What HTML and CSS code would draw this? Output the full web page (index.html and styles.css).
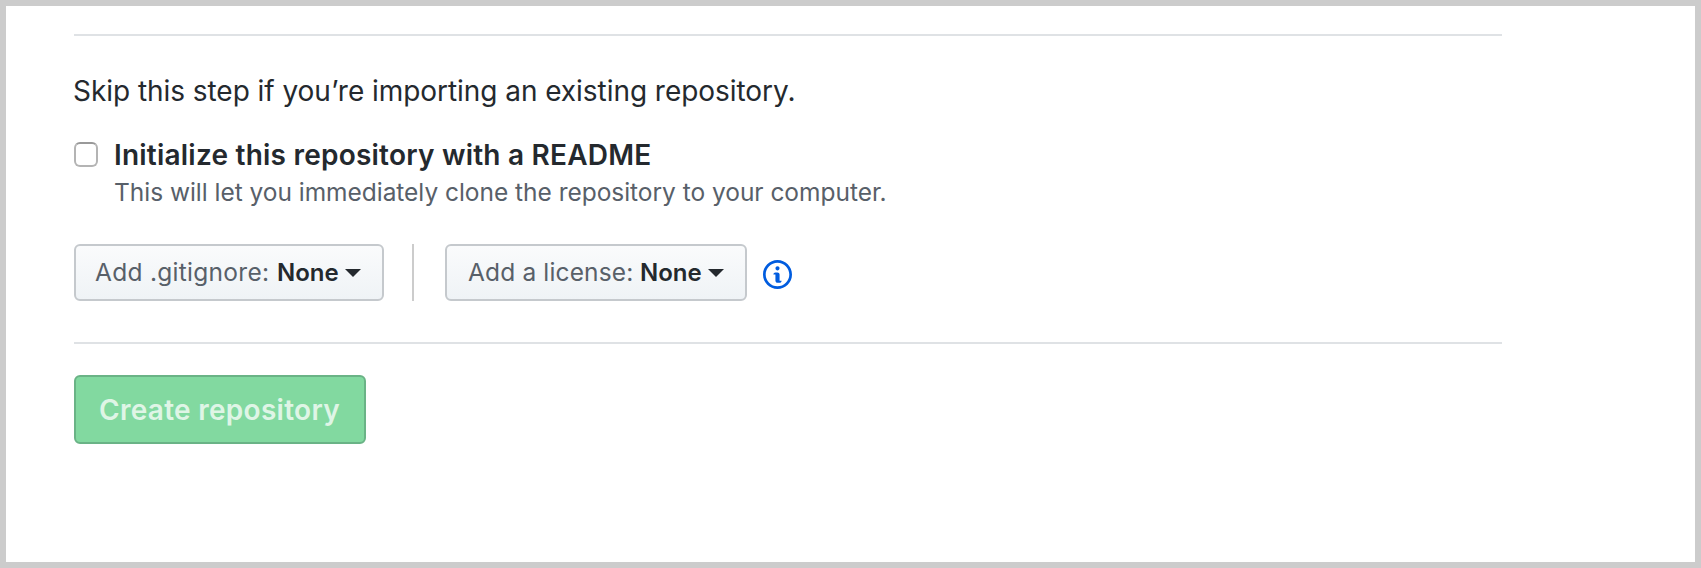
FILE: index.html
```html
<!DOCTYPE html>
<html lang="en">
<head>
<meta charset="utf-8">
<title>Create a new repository</title>
<link rel="stylesheet" href="styles.css">
</head>
<body>
<main class="page">
  <form class="form">
    <section class="options">
      <p class="skip">Skip this step if you’re importing an existing repository.</p>
      <div class="check-row">
        <input class="checkbox" type="checkbox" id="readme">
        <div>
          <label class="check-label" for="readme">Initialize this repository with a README</label>
          <p class="note">This will let you immediately clone the repository to your computer.</p>
        </div>
      </div>
      <div class="selects">
        <button class="select select-ignore" type="button"><span class="ignore-text">Add .gitignore:</span><b class="value">None</b><span class="caret"></span></button>
        <span class="divider"></span>
        <button class="select select-license" type="button"><span class="license-text">Add a license:</span><b class="value">None</b><span class="caret"></span></button>
        <svg class="info" viewBox="0 0 14 14" fill="#005cdf"><path fill-rule="evenodd" d="M6.3 5.69a.942.942 0 0 1-.28-.7c0-.28.09-.52.28-.7.19-.18.42-.28.7-.28.28 0 .52.09.7.28.18.19.28.42.28.7 0 .28-.09.52-.28.7a1 1 0 0 1-.7.3c-.28 0-.52-.11-.7-.3zM8 7.99c-.02-.25-.11-.48-.31-.69-.2-.19-.42-.3-.69-.31H6c-.27.02-.48.13-.69.31-.2.2-.3.44-.31.69h1v3c.02.27.11.5.31.69.2.2.42.31.69.31h1c.27 0 .48-.11.69-.31.2-.19.3-.42.31-.69H8V7.98v.01zM7 2.3c-3.14 0-5.7 2.54-5.7 5.68 0 3.14 2.56 5.7 5.7 5.7s5.7-2.55 5.7-5.7c0-3.15-2.56-5.69-5.7-5.69v.01zM7 .98c3.86 0 7 3.14 7 7s-3.14 7-7 7-7-3.12-7-7 3.14-7 7-7z" transform="translate(0 -.98)"/></svg>
      </div>
    </section>
    <button class="create" type="button" disabled>Create repository</button>
  </form>
</main>
</body>
</html>
```
FILE: styles.css
```css
* { box-sizing: border-box; }
body { margin: 0; font-family: Inter, "Liberation Sans", sans-serif; color: #24292e; background: #fff; }
p { margin: 0; }
.page { height: 568px; border: 6px solid #ccc; padding: 28px 193px 0 68px; }
.options { border-top: 2px solid #dfe2e5; border-bottom: 2px solid #dfe2e5; height: 310px; padding-top: 34px; }
.skip { margin-left: -1px; font-size: 28px; line-height: 42px; letter-spacing: -0.05px; white-space: nowrap; }
.check-row { display: flex; gap: 16px; margin-top: 24px; white-space: nowrap; }
.checkbox { appearance: none; width: 24px; height: 25px; margin: 6px 0 0; border: 2px solid #b4b4b4; border-top-color: #999; border-radius: 6px; background: #fff; }
.check-label { display: block; width: max-content; font-size: 28px; line-height: 38px; letter-spacing: 0.22px; font-weight: 600; }
.note { width: max-content; font-size: 24.5px; line-height: 36px; letter-spacing: -0.03px; color: #586069; }
.selects { display: flex; align-items: center; margin-top: 34px; }
.select { display: flex; align-items: baseline; height: 57px; margin: 0; padding: 8px 0 0; border: 2px solid #c5c9cd; border-radius: 6px; background: linear-gradient(#fafbfc, #eff3f6); font: 24.5px/36px Inter, sans-serif; color: #586069; white-space: nowrap; }
.select-ignore { width: 310px; padding-left: 19px; }
.select-license { width: 302px; padding-left: 21px; }
.ignore-text { width: 182px; text-align: left; letter-spacing: 0.28px; }
.license-text { width: 172px; text-align: left; letter-spacing: 0.15px; }
.value { width: 68px; text-align: left; font-size: 24px; font-weight: 600; color: #24292e; }
.caret { align-self: flex-start; margin-top: 15px; border: 8px solid transparent; border-top-color: #24292e; border-bottom: 0; }
.divider { width: 2px; height: 57px; margin: 0 31px 0 28px; background: #ccc; }
.info { width: 29px; height: 29px; margin: 4px 0 0 16px; }
.create { display: block; width: 292px; height: 69px; margin: 31px 0 0; padding: 0 1px 0 0; border: 2px solid #6ab386; border-radius: 6px; background: #82d9a0; font: 600 28px/42px Inter, sans-serif; letter-spacing: 0.28px; color: #dff5e6; white-space: nowrap; }
```
